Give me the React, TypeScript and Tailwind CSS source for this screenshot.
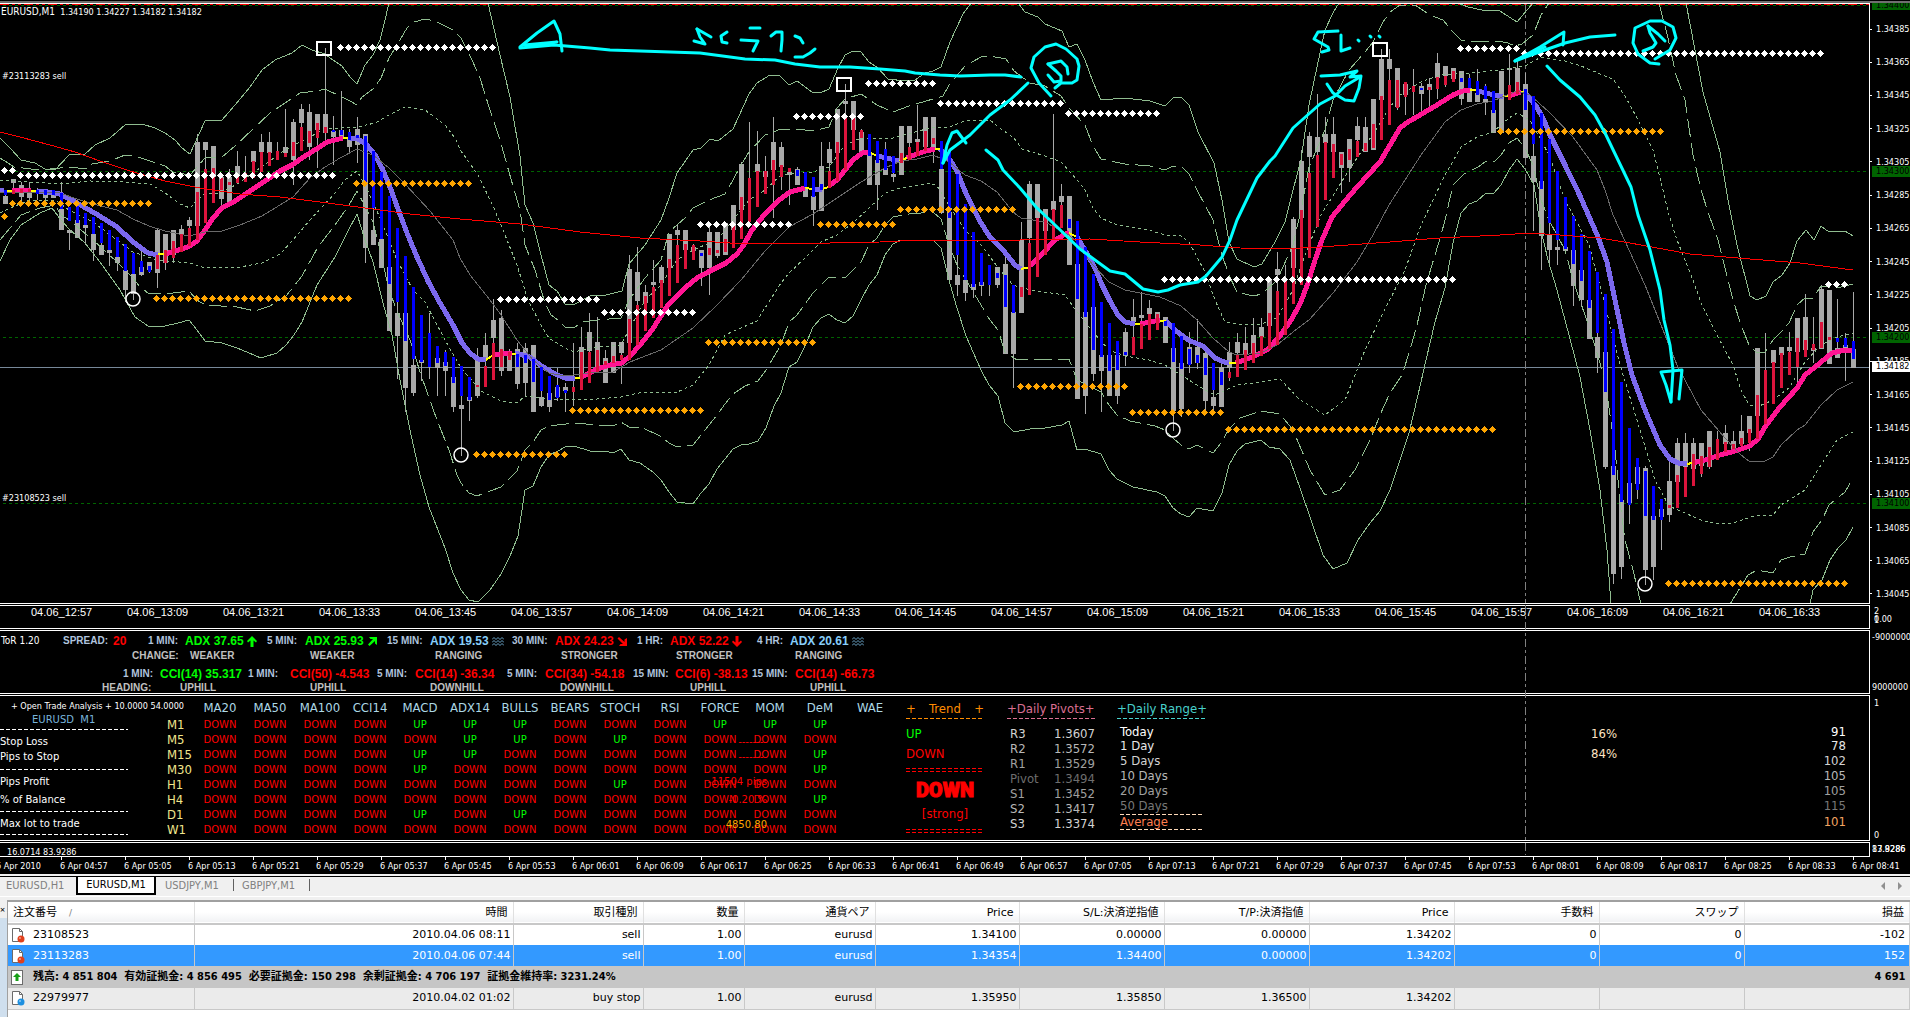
import React from "react";

const COND = "font-['DejaVu_Sans_Condensed','DejaVu_Sans','Noto_Sans_CJK_JP',sans-serif]";
const WIDE = "font-['DejaVu_Sans','Noto_Sans_CJK_JP',sans-serif]";
const ARIAL = "font-['Liberation_Sans',Arial,sans-serif]";

/* wickTop wickBottom bodyTop bodyBottom trend(r|b) trendTop trendBottom, one bar every 8px */
const BARS = `190 204 196 204 b 190 195|179 194 179 183 r 190 194|182 202 185 197 r 189 193|182 202 190 198 r 189 192|188 200 0 0 b 190 194|193 205 194 198 b 190 195|193 198 195 198 b 190 195|182 230 209 230 b 193 209|230 250 230 233 b 207 221|220 238 220 238 b 206 223
213 245 225 228 b 213 225|217 261 234 250 b 217 234|223 255 245 255 b 223 243|230 266 250 253 b 230 250|237 271 257 263 b 237 257|244 302 270 290 b 244 271|253 300 274 294 b 253 274|250 276 267 275 b 261 272|262 273 262 270 b 266 272|229 288 230 273 r 255 269
234 270 234 263 r 250 263|230 263 230 255 r 241 258|225 252 229 234 r 234 252|217 246 220 226 r 228 246|134 226 142 226 r 192 240|142 223 142 150 r 169 223|146 203 146 177 r 168 203|177 205 177 199 r 178 190|169 202 177 202 r 182 185|151 183 166 175 r 175 183
156 182 0 0 r 173 182|151 178 151 162 r 161 178|134 172 142 152 r 152 172|132 166 142 153 r 152 166|142 160 0 0 r 151 160|109 157 147 153 r 153 157|119 185 122 160 r 142 156|104 151 109 123 r 127 151|104 160 112 147 r 131 143|114 168 114 130 r 123 138
48 140 114 133 r 127 133|116 165 131 137 b 130 132|91 138 130 138 b 130 135|129 154 137 147 b 132 140|117 163 129 145 b 135 138|134 263 134 248 b 136 182|207 245 230 245 b 151 208|172 268 239 268 b 172 239|196 331 267 331 b 196 284|300 379 313 336 b 228 302
256 412 313 388 b 256 341|287 396 365 393 b 287 359|315 381 360 363 b 315 362|313 379 0 0 b 333 367|346 396 358 368 b 346 363|350 396 362 371 b 352 366|357 412 377 407 b 357 383|366 456 405 409 b 366 396|377 421 397 401 b 377 400|348 398 360 396 r 385 387
333 387 345 360 r 366 387|299 380 320 338 r 343 380|310 376 318 371 r 349 367|349 371 352 371 r 352 360|343 389 349 384 b 354 367|343 396 348 383 b 355 363|345 412 345 412 b 359 382|367 407 397 406 b 367 391|376 412 393 407 b 376 400|368 401 387 397 b 385 398
383 412 387 391 b 390 393|343 406 0 0 r 387 392|327 390 347 378 r 352 390|313 383 332 351 r 352 383|317 372 342 371 r 350 372|350 383 358 383 r 361 365|342 373 342 373 r 356 363|342 384 342 353 r 355 360|255 343 269 343 r 319 360|247 345 272 301 r 305 345
285 331 292 303 r 296 331|260 318 282 285 r 287 318|265 308 267 283 r 280 308|234 296 234 268 r 259 296|225 283 230 235 r 245 283|230 269 230 250 r 244 269|244 260 247 251 r 245 260|250 286 250 268 b 253 256|225 295 232 268 r 248 255|232 258 232 256 r 250 253
223 255 223 255 r 239 252|205 248 205 230 r 226 248|162 239 164 210 r 197 239|122 222 0 0 r 178 222|131 207 164 172 r 171 207|156 194 171 177 r 171 194|117 218 142 170 r 160 185|142 190 147 167 r 165 177|168 205 172 175 r 168 172|167 185 169 185 b 170 176
172 197 187 197 b 172 187|177 226 196 210 b 177 197|142 211 166 211 b 184 190|142 188 149 163 r 171 188|109 181 109 153 r 142 181|84 170 101 104 r 118 170|101 150 101 130 r 118 150|129 152 132 152 r 130 138|134 185 153 185 b 134 156|141 210 160 185 b 141 163
142 175 168 175 b 149 170|156 182 174 177 b 156 173|126 175 126 175 r 153 163|126 160 126 143 r 147 160|105 156 139 142 r 142 156|117 151 117 147 r 131 151|117 163 117 150 r 138 144|141 214 169 213 b 141 169|150 280 212 280 b 150 218|174 296 275 285 b 174 255
204 301 280 293 b 204 280|232 298 284 290 b 232 287|253 296 282 286 b 253 285|265 296 0 0 b 265 285|267 288 267 285 b 273 278|250 354 264 354 b 275 307|285 388 312 354 b 285 313|222 313 240 313 r 287 297|181 295 184 238 r 243 295|184 277 184 218 r 218 277
209 255 209 231 r 216 255|114 239 201 210 r 209 239|184 228 196 202 r 205 228|196 265 196 265 b 219 228|221 399 264 399 b 221 299|247 414 312 396 b 247 317|274 381 307 374 b 274 350|302 412 355 371 b 302 357|323 396 355 396 b 323 371|341 404 355 396 b 341 370
328 366 332 356 b 352 355|299 355 317 322 r 337 355|292 349 315 318 r 324 349|300 340 308 314 r 314 340|312 330 312 322 r 314 330|317 343 317 343 b 321 326|323 431 348 411 b 323 362|336 417 363 409 b 336 369|332 373 347 364 b 349 365|319 369 347 363 b 355 363
350 412 353 401 b 358 375|363 410 397 406 b 363 390|364 407 367 407 b 372 385|342 381 352 368 r 372 378|333 377 342 353 r 355 377|327 370 343 355 r 350 370|318 363 335 353 r 343 363|318 356 327 337 r 336 356|280 349 280 326 r 313 349|252 345 269 275 r 291 345
265 335 0 0 r 280 335|217 304 219 268 r 249 304|150 285 161 218 r 210 285|132 258 136 157 r 173 258|94 227 137 152 r 155 227|117 200 134 143 r 142 200|117 178 134 152 r 144 178|152 193 152 168 r 154 165|139 182 139 168 r 149 160|117 157 126 140 r 141 157
117 152 127 152 r 143 151|99 150 99 150 r 124 148|49 140 59 100 r 96 140|49 125 59 69 r 80 125|68 110 68 107 r 80 108|82 115 84 95 r 82 97|69 115 0 0 r 86 92|83 115 86 94 b 88 90|78 107 84 90 r 87 90|53 99 63 78 r 77 89
66 87 66 76 r 76 85|68 82 68 79 r 71 82|71 105 71 99 b 78 82|74 102 88 102 b 78 88|69 102 93 102 b 81 95|84 115 99 102 b 86 99|91 133 110 133 b 91 113|71 133 71 133 r 0 0|54 100 68 70 r 85 100|60 95 68 95 r 82 94
73 158 84 158 b 89 110|96 231 156 182 b 96 144|113 270 181 236 b 113 189|139 263 235 250 b 139 223|171 265 247 250 b 171 240|197 251 247 251 b 197 249|216 306 250 286 b 216 264|234 306 270 300 b 234 281|251 339 300 339 b 251 308|272 373 337 358 b 272 333
294 469 352 467 b 294 392|329 584 466 574 b 329 475|382 579 500 567 b 382 502|428 524 483 503 b 428 505|458 499 467 484 b 458 490|466 585 468 570 b 471 516|486 580 516 567 b 486 520|499 550 509 517 b 499 520|454 522 481 515 r 505 508|438 508 443 482 r 475 508
433 497 443 467 r 467 497|438 486 443 469 r 454 486|443 477 443 466 r 456 474|431 469 431 467 r 447 467|431 460 0 0 r 439 460|425 452 433 444 r 442 452|431 451 441 450 r 444 449|415 446 431 444 r 438 446|416 451 416 433 r 429 443|348 439 348 416 r 395 439
333 424 0 0 r 370 424|350 404 350 363 r 362 404|347 388 347 355 r 353 388|332 375 347 351 r 352 375|318 389 318 352 r 338 367|294 357 317 350 r 340 357|317 363 348 351 r 344 350|285 349 289 349 r 322 348|290 364 290 364 r 337 340|299 358 348 358 b 338 342
333 381 345 349 b 338 347|292 368 349 368 b 341 359`
  .split(/[|\n]/)
  .map((s) => s.trim().split(" "));

const UPPER_SOLID = [
  "0,138 10,148 21,160 35,163 45,169 55,170 69,155 85,154 95,145 110,138 125,125 142,124 155,128 165,133 175,140 182,148 190,154 205,121 222,120 235,105 250,87 262,70 275,60 292,53 302,45 312,50 325,54 333,60 342,66 350,77 357,84 365,65 373,55 380,40 385,20 389,3",
  "488,3 500,55 510,97 520,156 525,205 533,223 541,255 549,285 557,291 565,304 575,304 590,296 606,295 622,291 629,264 645,245 661,220 669,198 677,173 693,150 701,148 710,139 718,141 733,129 749,94 757,83 770,75 780,76 789,85 797,81 812,92 820,93 829,89 838,68 845,55 853,51 861,52 869,62 878,68 888,79 905,81 915,80 925,73 933,71 941,67 950,42 963,14 971,3",
  "1018,3 1025,12 1038,17 1045,24 1062,31 1069,47 1077,44 1085,60 1093,82 1101,100 1125,98 1150,101 1165,106 1173,98 1181,97 1189,105 1198,132 1214,163 1222,200 1229,242 1237,259 1254,267 1262,264 1275,242 1285,222 1293,190 1301,160 1309,105 1317,67 1325,30 1333,13 1339,3",
  "1458,3 1468,7 1482,10 1500,11 1517,22 1533,3",
  "1686,3 1695,50 1703,92 1720,152 1728,200 1737,245 1750,296 1757,300 1766,296 1773,282 1782,275 1790,263 1797,241 1806,230 1814,240 1821,226 1829,232 1845,231 1853,236",
];
const LOWER_SOLID = [
  "0,261 10,240 21,225 40,213 52,208 61,220 69,229 85,243 100,262 120,290 135,317 148,326 165,326 178,323 189,320 197,330 205,341 222,343 237,348 261,358 277,353 286,345 294,335 302,322 317,285 335,257 347,233 357,214 365,240 373,262 383,303 392,335 400,380 410,430 420,475 429,507 445,548 453,573 461,590 469,600 478,602 490,590 501,574 510,556 518,536 525,490 533,486 541,467 549,455 558,451 565,447 574,446 590,451 605,451 613,453 621,449 629,460 640,463 653,472 661,480 669,492 677,502 693,504 701,493 709,484 717,469 733,449 741,445 749,444 758,441 766,428 774,406 781,393 789,367 797,362 805,346 813,327 821,318 829,314 837,320 845,323 853,316 861,300 869,285 877,275 885,255 893,244 900,240 933,240 941,248 949,280 957,308 966,336 981,370 989,385 998,396 1005,423 1014,432 1030,429 1045,428 1062,425 1069,421 1077,450 1085,449 1101,454 1109,470 1117,479 1133,487 1157,492 1165,496 1173,508 1181,514 1189,517 1197,508 1213,511 1222,493 1229,465 1237,451 1245,444 1261,440 1269,447 1280,449 1290,460 1300,488 1311,520 1323,555 1333,569 1347,563 1358,540 1370,523 1380,511 1390,490 1400,460 1409,433 1418,395 1426,360 1435,322 1445,288 1453,243 1461,213 1469,204 1477,201 1485,194 1494,193 1501,185 1509,170 1517,159 1525,169 1534,185 1541,230 1548,260 1557,290 1565,320 1580,377 1590,430 1600,490 1607,550 1611,604",
  "1810,604 1813,590 1822,580 1830,560 1838,548 1846,540 1853,527",
];
const DASHED = [
  "0,158 8,163 14,167 40,170 70,167 85,169 92,164 110,161 125,155 135,156 150,161 165,166 173,172 190,175 205,158 222,157 235,146 253,129 270,113 285,103 300,93 317,91 325,89 342,97 350,101 357,105 362,97 373,89 381,78 389,58 397,45 407,28 414,22 425,19 435,21 453,30 461,38 472,60 480,78 490,110 500,140 509,172 520,210 525,245 535,270 545,303 551,315 558,320 566,328 575,327 583,322 598,320 621,318 629,300 645,278 661,260 669,232 685,218 693,208 709,200 725,194 733,180 741,165 749,152 765,135 781,129 797,129 813,131 829,127 837,108 845,99 861,94 877,105 893,112 909,106 933,99 943,96 949,85 965,66 981,57 990,56 1006,59 1014,71 1030,83 1045,86 1061,96 1069,108 1085,125 1093,146 1101,159 1125,164 1150,166 1165,170 1173,166 1181,166 1189,174 1197,190 1213,220 1221,252 1229,275 1237,292 1253,296 1262,294 1277,280 1293,245 1301,210 1309,167 1325,130 1333,100 1349,70 1365,52 1373,42 1383,22 1390,12 1400,5 1415,5 1430,15 1443,20 1453,32 1461,40 1480,42 1498,41 1508,43 1515,46 1522,44 1533,35 1541,15 1549,3",
  "1659,3 1668,38 1676,75 1685,100 1693,155 1701,190 1709,215 1718,240 1733,300 1741,325 1749,345 1757,353 1765,352 1773,340 1781,332 1789,323 1797,305 1805,298 1813,298 1821,286 1837,288 1853,284",
  "0,240 10,228 21,215 40,208 55,205 61,215 69,220 93,240 117,262 133,278 140,287 148,293 165,294 189,291 197,300 205,305 237,307 255,311 270,306 286,296 302,276 318,247 335,225 349,205 357,191 365,206 373,222 380,250 389,290 397,311 410,340 421,375 437,420 449,450 457,475 461,483 469,493 477,496 490,491 501,487 517,471 525,450 533,442 541,430 549,426 574,423 598,425 613,426 621,422 629,427 643,428 660,436 669,443 677,447 693,445 701,435 717,415 725,404 733,394 745,386 758,381 766,370 781,345 789,322 797,315 813,293 829,277 845,278 853,270 861,262 869,245 877,238 885,225 893,217 909,214 933,212 941,219 949,245 957,265 981,305 990,320 998,330 1005,352 1017,360 1053,359 1069,359 1077,380 1101,392 1109,405 1117,415 1130,421 1155,426 1165,430 1173,438 1181,445 1189,449 1197,445 1213,453 1221,443 1229,429 1240,418 1261,411 1280,414 1293,430 1310,470 1325,495 1340,490 1355,470 1370,440 1380,415 1390,393 1402,375 1410,350 1417,325 1426,285 1441,235 1445,220 1453,185 1464,174 1478,167 1485,162 1495,161 1501,155 1509,143 1517,138 1525,148 1533,165 1541,200 1549,220 1565,250 1573,280 1590,330 1605,380 1615,450 1621,510 1625,540 1633,570 1641,604",
  "1730,604 1740,588 1748,575 1757,570 1773,573 1781,560 1790,557 1805,554 1813,532 1822,520 1829,505 1845,492 1853,478",
];
const DOTTED = [
  "0,180 60,184 90,181 125,182 150,184 165,193 180,204 190,208 197,200 205,194 221,193 237,184 253,173 285,150 325,129 357,127 375,123 389,115 405,107 425,110 445,125 455,138 461,151 478,175 493,206 501,225 517,265 528,300 541,325 549,338 565,348 574,352 590,348 621,345 629,330 645,300 661,285 677,260 693,250 717,240 733,220 749,200 765,190 781,175 800,173 813,172 829,167 845,145 861,138 893,138 930,128 949,127 965,121 990,120 997,126 1014,138 1022,149 1045,156 1061,162 1077,180 1085,190 1093,208 1101,218 1117,225 1149,230 1165,235 1181,236 1189,242 1205,272 1215,300 1225,322 1237,324 1261,324 1277,318 1293,290 1305,255 1321,215 1349,170 1381,122 1389,108 1400,95 1421,82 1440,75 1470,73 1500,70 1525,66 1541,57 1565,61 1581,66 1605,76 1613,79 1625,96 1637,118 1653,150 1661,182 1669,215 1677,240 1693,280 1701,303 1717,335 1733,365 1741,390 1749,405 1757,407 1773,400 1789,388 1805,362 1821,345 1837,337 1853,333",
  "0,213 10,208 30,200 55,200 69,210 93,222 117,240 133,252 157,260 190,263 205,268 240,267 262,263 280,254 293,240 310,220 335,193 345,180 357,171 365,185 381,220 397,260 413,290 425,302 445,340 461,368 481,391 501,401 517,403 525,396 550,399 597,399 621,397 643,392 675,393 693,385 709,365 725,335 741,328 757,321 765,308 781,283 789,273 805,258 821,242 837,235 853,223 869,208 885,193 900,188 930,183 937,186 949,205 965,230 981,245 1000,270 1013,285 1030,290 1065,295 1077,312 1093,332 1109,350 1125,356 1149,360 1165,365 1181,375 1205,390 1215,395 1237,385 1261,382 1280,379 1300,400 1325,415 1345,400 1365,350 1381,317 1405,270 1421,225 1445,175 1461,147 1477,137 1493,132 1509,118 1517,113 1530,120 1541,140 1549,155 1565,200 1589,245 1605,305 1620,365 1640,430 1655,480 1669,506 1685,513 1701,520 1717,524 1733,523 1757,515 1773,515 1781,505 1805,490 1821,465 1837,440 1853,432",
];
const MID =
  "0,192 60,193 77,199 93,204 117,210 133,219 149,226 165,231 189,236 205,232 222,231 240,225 262,216 293,197 310,178 325,167 340,158 357,149 373,155 389,168 405,184 430,211 453,240 460,258 470,275 490,300 501,315 517,340 533,360 549,373 565,376 590,373 613,372 630,362 640,358 661,350 693,328 717,305 741,280 765,251 789,227 813,214 837,198 861,182 885,168 901,161 917,159 933,155 949,162 965,175 981,181 997,192 1013,212 1021,218 1045,222 1069,235 1077,242 1085,255 1093,265 1109,282 1125,290 1160,297 1181,306 1197,320 1213,338 1229,352 1237,355 1261,353 1277,345 1293,332 1309,320 1333,293 1357,262 1373,235 1389,205 1405,180 1421,155 1445,122 1461,110 1477,104 1493,101 1509,94 1517,91 1530,95 1549,112 1573,137 1597,170 1605,190 1613,215 1630,252 1645,285 1661,325 1677,365 1701,410 1725,438 1741,455 1749,461 1765,461 1773,457 1781,445 1797,430 1805,425 1821,405 1837,390 1853,382";
const SLOW =
  "0,132 20,137 50,145 75,152 100,161 130,171 165,181 200,188 240,194 280,197 320,202 365,208 410,214 460,219 520,224 580,232 640,238 700,241 730,243 760,243 830,243 880,242 920,240 960,240 1020,240 1090,239 1140,242 1200,245 1240,248 1280,249 1320,247 1390,242 1440,238 1500,235 1530,233 1560,235 1600,238 1630,243 1690,254 1750,259 1800,263 1853,270";

const DOWNTREND = [
  "0,190 4,191",
  "37,191 48,192 60,194 77,203 98,215 117,227 133,242 148,253 158,255",
  "350,138 358,139 366,144 375,155 382,168 390,187 398,209 407,233 417,257 428,281 440,303 453,325 462,343 470,353 478,359 486,360",
  "515,353 530,357 540,365 555,374 565,378 575,379",
  "813,190 822,189",
  "877,156 887,158 899,161",
  "940,149 950,160 957,171 965,191 973,208 981,223 990,237 1003,250 1015,265 1021,269",
  "1077,237 1086,252 1095,268 1102,285 1110,301 1118,315 1125,322 1135,324",
  "1166,321 1175,330 1188,340 1203,346 1215,358 1224,362 1229,363",
  "1478,91 1490,94 1503,97",
  "1526,94 1536,106 1543,118 1550,135 1565,165 1580,196 1598,237 1607,262 1615,300 1624,343 1632,375 1645,410 1660,445 1670,459 1678,463 1687,464",
];
const UPTREND = [
  "12,191 31,190",
  "165,254 175,251 188,247 197,241 205,230 213,218 222,208 235,201 250,191 265,181 280,171 292,165 305,156 318,148 327,142 343,138",
  "493,355 501,354 512,353",
  "582,377 597,369 610,365 622,363 630,356 640,345 652,330 668,305 685,288 697,278 708,272 726,263 737,254 743,246 752,230 764,215 778,201 790,192 805,188",
  "829,186 837,180 845,170 853,160 862,153 869,152",
  "907,158 917,154 926,151 935,149",
  "1030,266 1040,256 1055,240 1069,232",
  "1140,324 1150,322 1160,320",
  "1236,363 1255,356 1268,349 1280,336 1291,320 1300,304 1308,283 1315,260 1322,240 1332,217 1350,195 1368,175 1380,162 1390,145 1400,128 1408,122 1420,115 1437,105 1453,95 1463,91 1470,90",
  "1508,96 1521,92",
  "1692,463 1705,460 1720,455 1735,451 1750,446 1758,439 1765,427 1780,407 1797,388 1805,375 1820,363 1832,353 1845,350 1855,351",
];
const TURNS = [
  "4,191 12,191", "31,191 37,191", "158,254 165,254", "343,138 350,138", "486,360 493,355", "512,354 516,354", "575,378 582,378",
  "805,187 813,190", "822,189 829,187", "869,152 877,156", "899,161 907,158", "935,149 940,149", "1021,269 1030,267", "1069,233 1077,237",
  "1135,324 1140,324", "1160,321 1166,321", "1229,363 1236,363", "1470,90 1478,90", "1503,96 1508,96", "1521,92 1526,93", "1687,464 1692,463",
];

const RES = [[4, 170, 2], [20, 175, 40], [340, 47, 20], [500, 299, 13], [604, 312, 12], [700, 224, 12], [796, 116, 9], [868, 83, 9], [940, 103, 16], [1068, 113, 12], [1164, 279, 37], [1460, 48, 8], [1524, 53, 38], [1828, 284, 3]];
const SUP = [[4, 216, 1], [12, 203, 18], [156, 298, 25], [356, 183, 15], [476, 454, 12], [572, 410, 17], [708, 342, 14], [820, 224, 10], [900, 209, 15], [1020, 386, 14], [1132, 412, 12], [1228, 429, 34], [1500, 131, 21], [1668, 583, 23]];

const INK = [
  "520,48 554,45 590,48 610,50 700,53 745,59 775,60 795,64 820,67 850,67 880,69 905,71 915,73 940,75 960,76 990,75 1005,75 1021,77",
  "520,47 537,33 554,21 560,34 562,51", "524,45 557,42 530,46", "697,29 711,37", "697,29 700,37 705,44 694,41", "727,32 721,36 722,42 727,43",
  "750,28 760,28", "741,40 758,41 753,51", "771,36 776,32 782,32 782,40 781,51", "795,36 800,38 803,43", "795,57 803,57 810,53 815,49",
  "1028,83 1010,100 990,115 970,135 950,150 943,163", "943,163 947,145 952,133 957,131 966,143",
  "1051,96 1039,83 1031,68 1034,57 1045,47 1056,44 1066,49 1077,59 1079,66 1077,80 1072,83 1061,83 1055,88",
  "1048,64 1061,61 1067,67 1068,74", "1048,64 1056,71 1061,76 1061,81 1054,82 1048,75",
  "986,150 998,160 1003,170 1020,188 1036,207 1055,225 1080,249 1110,271 1125,274 1143,289 1158,292 1168,290 1180,285 1198,282 1206,276 1222,257 1230,240 1237,220 1257,178 1270,161 1275,156 1293,128 1320,104 1335,96 1345,86 1360,77",
  "1321,76 1340,75 1357,71 1350,77 1361,76 1359,88 1354,101 1345,100 1333,93 1327,84",
  "1338,31 1318,32 1314,39 1328,47 1329,50 1322,52", "1341,35 1341,51 1350,48", "1358,40 1359,41", "1370,36 1371,37", "1379,36 1380,37",
  "1515,61 1545,50 1565,43 1590,37 1615,35", "1515,61 1540,47 1564,32 1563,45", "1516,60 1545,47",
  "1659,64 1650,63 1638,54 1633,43 1635,28 1650,21 1662,21 1673,27 1676,38 1670,50 1655,59",
  "1648,26 1650,33 1656,43 1653,47 1643,51", "1648,26 1658,34 1665,41",
  "1547,66 1560,80 1580,97 1595,115 1605,133 1618,160 1631,187 1638,215 1650,250 1660,290 1664,320 1670,345 1673,370 1671,402",
  "1679,399 1682,370 1661,372 1666,385 1671,402",
];

const diamonds = (rows: number[][]) =>
  rows
    .map(([x, y, n]) => Array.from({ length: n }, (_, i) => `M${x + i * 8 - 3} ${y + 0.5}l3.500 -3.500l3.500 3.500l-3.500 3.500z`).join(""))
    .join("");

function Lines({ list, color, w = 1, dash }: { list: string[]; color: string; w?: number; dash?: string }) {
  return (
    <g fill="none" stroke={color} strokeWidth={w} strokeDasharray={dash}>
      {list.map((p) => (
        <polyline key={p} points={p} />
      ))}
    </g>
  );
}

function PriceChart() {
  return (
    <svg className="block h-[599px] w-full" viewBox="0 4 1869 599" preserveAspectRatio="none" role="img" aria-label="EURUSD M1 price chart">
      <g shapeRendering="crispEdges">
        <path d="M0 4.5H1869" stroke="#ff0000" strokeDasharray="9 3 3 3 3 3" />
        {[5, 171, 337, 503].map((y) => (
          <path key={y} d={`M3 ${y}.5H1869`} stroke="#006400" strokeDasharray="3 3" />
        ))}
        <path d="M0 367.5H1869" stroke="#778899" />
        <path d="M1525.5 4V603" stroke="#808080" strokeDasharray="8 3 3 3" />
        {BARS.map((b, i) => {
          const x = i * 8 + 5;
          const [wt, wb, bt, bb] = b.slice(0, 4).map(Number);
          return (
            <g key={i} fill="#a9a9a9">
              <rect x={x} y={wt} width="1" height={wb - wt} />
              {bb > 0 && <rect x={x - 2} y={bt} width="5" height={bb - bt} />}
            </g>
          );
        })}
      </g>
      <g shapeRendering="crispEdges">
        <Lines list={DOWNTREND} color="#7b68ee" w={5} />
        <Lines list={UPTREND} color="#ff1493" w={5} />
        <Lines list={TURNS} color="#ffff00" w={2} />
        <Lines list={[MID]} color="#696969" />
        <Lines list={[...UPPER_SOLID, ...LOWER_SOLID]} color="#8fbc8f" />
        <Lines list={DASHED} color="#8fbc8f" dash="18 6" />
        <Lines list={DOTTED} color="#8fbc8f" dash="3 3" />
        {BARS.map((b, i) =>
          b[5] === "0" ? null : (
            <rect key={i} x={i * 8 + 4} y={Number(b[5])} width="3" height={Number(b[6]) - Number(b[5])} fill={b[4] === "r" ? "#dc143c" : "#0000ff"} />
          ),
        )}
        <Lines list={[SLOW]} color="#ff0000" />
        <path d={diamonds(RES)} fill="#fff" />
        <path d={diamonds(SUP)} fill="#ffa500" />
      </g>
      <g fill="none" stroke="#fff" strokeWidth="2">
        {[[324, 48], [844, 84], [1380, 49]].map(([x, y]) => (
          <rect key={x} x={x - 7} y={y - 6} width="14" height="13" />
        ))}
        {[[133, 299], [461, 455], [1173, 430], [1645, 584]].map(([x, y]) => (
          <circle key={x} cx={x} cy={y} r="7" strokeWidth="1.5" />
        ))}
      </g>
      <g fill="none" stroke="#00ffff" strokeWidth="3" strokeLinecap="round" strokeLinejoin="round">
        {INK.map((p) => (
          <polyline key={p} points={p} />
        ))}
      </g>
    </svg>
  );
}

const PRICES = ["1.34385", "1.34365", "1.34345", "1.34325", "1.34305", "1.34285", "1.34265", "1.34245", "1.34225", "1.34205", "1.34185", "1.34165", "1.34145", "1.34125", "1.34105", "1.34085", "1.34065", "1.34045"];

function Axis({ children, className = "" }: { children?: React.ReactNode; className?: string }) {
  return <div className={`relative w-10 shrink-0 overflow-hidden text-[9px] leading-3 text-white ${COND} ${className}`}>{children}</div>;
}

function PriceAxis() {
  return (
    <Axis>
      <div className="flex h-full flex-col justify-between pt-5 pb-1">
        {PRICES.map((p) => (
          <div key={p} className="flex h-3 items-center gap-1">
            <i className="h-px w-0.5 bg-white" />
            {p}
          </div>
        ))}
      </div>
      <div className="absolute top-[-3px] right-0 left-0.5 h-[10px] bg-[#006400] pl-1 leading-[10px] text-black">1.34400</div>
      <div className="absolute top-[163px] right-0 left-0.5 h-[11px] bg-[#006400] pl-1 leading-[11px] text-black">1.34300</div>
      <div className="absolute top-[329px] right-0 left-0.5 h-[11px] bg-[#006400] pl-1 leading-[11px] text-black">1.34200</div>
      <div className="absolute top-[495px] right-0 left-0.5 h-[11px] bg-[#006400] pl-1 leading-[11px] text-black">1.34100</div>
      <div className="absolute top-[358px] right-0 left-0.5 h-[11px] bg-white pl-1 leading-[11px] text-black">1.34182</div>
    </Axis>
  );
}

function Panel({ className, axis, children }: { className: string; axis: React.ReactNode; children?: React.ReactNode }) {
  return (
    <section className={`mt-px flex ${className}`}>
      <div className="relative min-w-0 flex-1 overflow-hidden border-y border-r border-white whitespace-nowrap">{children}</div>
      {axis}
    </section>
  );
}

const clock = (start: number, step: number, n: number) =>
  Array.from({ length: n }, (_, i) => {
    const t = start + step * i;
    return `${String(Math.floor(t / 60)).padStart(2, "0")}:${String(t % 60).padStart(2, "0")}`;
  });

type SignalKind = "up" | "upright" | "downright" | "down" | "wave";
function Signal({ kind }: { kind: SignalKind }) {
  if (kind === "wave")
    return (
      <svg width="12" height="9" viewBox="0 0 12 9" fill="none" stroke="#87cefa" strokeWidth=".8" aria-hidden="true">
        <path d="M0 2.500l2-2 2 2 2-2 2 2 2-2 2 2M0 5.500l2-2 2 2 2-2 2 2 2-2 2 2M0 8.500l2-2 2 2 2-2 2 2 2-2 2 2" />
      </svg>
    );
  const d = {
    up: "M5 0l5 5-1 1.500-2.500-2V11h-3V4.500L1 6.500 0 5z",
    down: "M5 11l5-5-1-1.500-2.500 2V0h-3v6.500L1 4.500 0 6z",
    upright: "M2 1h8v8L8 7.500V5L2.500 10 1 8.500 6 3H3.500z",
    downright: "M10 10H2l1.500-2H6L0.500 2.500 2 1l5.500 5V3.500L10 2z",
  }[kind];
  return (
    <svg width="10" height="11" viewBox="0 0 10 11" fill={kind.startsWith("up") ? "#00ff00" : "#ff0000"} aria-hidden="true">
      <path d={d} />
    </svg>
  );
}

const LBL = "text-[10px] text-[#b0c4de]";
const GRY = "text-[10px] text-[#c0c0c0]";
const RED = "text-xs text-[#ff0000]";
const LIME = "text-xs text-[#00ff00]";
const SKY = "text-xs text-[#87cefa]";

type Item = [string | { kind: SignalKind }, string, string];
const ROW1: Item[] = [
  ["SPREAD:", LBL, "w-[50px]"], ["20", RED, "w-[35px]"],
  ["1 MIN:", LBL, "w-[37px]"], ["ADX 37.65", LIME, "w-[62px]"], [{ kind: "up" }, "", "w-[20px]"],
  ["5 MIN:", LBL, "w-[38px]"], ["ADX 25.93", LIME, "w-[62px]"], [{ kind: "upright" }, "", "w-[20px]"],
  ["15 MIN:", LBL, "w-[43px]"], ["ADX 19.53", SKY, "w-[62px]"], [{ kind: "wave" }, "", "w-[20px]"],
  ["30 MIN:", LBL, "w-[43px]"], ["ADX 24.23", RED, "w-[62px]"], [{ kind: "downright" }, "", "w-[20px]"],
  ["1 HR:", LBL, "w-[33px]"], ["ADX 52.22", RED, "w-[62px]"], [{ kind: "down" }, "", "w-[25px]"],
  ["4 HR:", LBL, "w-[33px]"], ["ADX 20.61", SKY, "w-[62px]"], [{ kind: "wave" }, "", "w-[20px]"],
];
const ROW2: Item[] = [["CHANGE:", GRY, "w-[58px]"], ["WEAKER", GRY, "w-[120px]"], ["WEAKER", GRY, "w-[125px]"], ["RANGING", GRY, "w-[126px]"], ["STRONGER", GRY, "w-[115px]"], ["STRONGER", GRY, "w-[119px]"], ["RANGING", GRY, "w-[60px]"]];
const ROW3: Item[] = [
  ["1 MIN:", LBL, "w-[37px]"], ["CCI(14) 35.317", LIME, "w-[88px]"], ["1 MIN:", LBL, "w-[42px]"], ["CCI(50) -4.543", RED, "w-[87px]"],
  ["5 MIN:", LBL, "w-[38px]"], ["CCI(14) -36.34", RED, "w-[92px]"], ["5 MIN:", LBL, "w-[38px]"], ["CCI(34) -54.18", RED, "w-[88px]"],
  ["15 MIN:", LBL, "w-[42px]"], ["CCI(6) -38.13", RED, "w-[77px]"], ["15 MIN:", LBL, "w-[43px]"], ["CCI(14) -66.73", RED, "w-[90px]"],
];
const ROW4: Item[] = [["HEADING:", GRY, "w-[78px]"], ["UPHILL", GRY, "w-[130px]"], ["UPHILL", GRY, "w-[120px]"], ["DOWNHILL", GRY, "w-[130px]"], ["DOWNHILL", GRY, "w-[130px]"], ["UPHILL", GRY, "w-[120px]"], ["UPHILL", GRY, "w-[60px]"]];

function Row({ items, className }: { items: Item[]; className: string }) {
  return (
    <div className={`flex items-center leading-none font-bold ${ARIAL} ${className}`}>
      {items.map(([t, c, w], i) => (
        <span key={i} className={`shrink-0 ${w} ${c}`}>
          {typeof t === "string" ? t : <Signal kind={t.kind} />}
        </span>
      ))}
    </div>
  );
}

const HEADS = ["MA20", "MA50", "MA100", "CCI14", "MACD", "ADX14", "BULLS", "BEARS", "STOCH", "RSI", "FORCE", "MOM", "DeM", "WAE"];
const MATRIX: [string, string][] = [
  ["M1", "DDDDUUUDDDUUU"],
  ["M5", "DDDDDUUDUDDDD"],
  ["M15", "DDDDUUDDDDDDU"],
  ["M30", "DDDDUDDDDDDDU"],
  ["H1", "DDDDDDDDUDDDD"],
  ["H4", "DDDDDDDDDDDDU"],
  ["D1", "DDDDUDUDDDDDD"],
  ["W1", "DDDDDDDDDDDDD"],
];

function SignalTable() {
  return (
    <table className={`mt-[3px] w-[728px] shrink-0 table-fixed border-collapse self-start ${COND}`}>
      <thead>
        <tr className="h-[18px] text-[13px] leading-[18px] text-[#add8e6]">
          <th className="w-7 p-0" aria-label="Timeframe" />
          {HEADS.map((h) => (
            <th key={h} className="p-0 font-normal">{h}</th>
          ))}
        </tr>
      </thead>
      <tbody>
        {MATRIX.map(([tf, cells]) => (
          <tr key={tf} className="h-[15px] leading-[15px]">
            <th className="p-0 text-left text-[13px] font-normal text-[#f0e68c]">{tf}</th>
            {cells.split("").map((c, i) => (
              <td key={i} className={`p-0 text-center text-[10px] ${WIDE} ${c === "U" ? "text-[#00ff00]" : "text-[#ff0000]"}`}>{c === "U" ? "UP" : "DOWN"}</td>
            ))}
            <td className="p-0" />
          </tr>
        ))}
      </tbody>
    </table>
  );
}

function Dashes({ className }: { className: string }) {
  return (
    <div
      className={`h-px bg-[repeating-linear-gradient(90deg,currentColor_0_4px,transparent_4px_6px)] ${className}`}
    />
  );
}

function Double({ className }: { className: string }) {
  return (
    <div className={className}>
      <Dashes className="" />
      <Dashes className="mt-0.5" />
    </div>
  );
}

function TradeAnalysis() {
  const row = "h-[15px] leading-[14px]";
  return (
    <div className={`w-[167px] shrink-0 text-[10px] text-white ${WIDE}`}>
      <div className={`ml-[11px] pt-[3px] text-[9px] leading-[14px] ${COND}`}>+ Open Trade Analysis + 10.0000 54.0000</div>
      <div className="ml-8 h-4 leading-[13px] whitespace-pre text-[#79b4dc]">EURUSD  M1</div>
      <Dashes className="w-32" />
      <div className={`mt-[5px] ${row}`}>Stop Loss</div>
      <div className={row}>Pips to Stop</div>
      <Dashes className="mt-1 w-32" />
      <div className={`mt-[5px] ${row}`}>Pips Profit</div>
      <div className={`mt-[3px] ${row}`}>% of Balance</div>
      <Dashes className="mt-[3px] w-32" />
      <div className={`mt-[5px] ${row}`}>Max lot to trade</div>
      <Dashes className="mt-[2px] w-32" />
    </div>
  );
}

const PIVOTS: [string, string, string][] = [
  ["R3", "1.3607", "text-[#d3d3d3]"],
  ["R2", "1.3572", "text-[#b8b8b8]"],
  ["R1", "1.3529", "text-[#a0a0a0]"],
  ["Pivot", "1.3494", "text-[#6e6e6e]"],
  ["S1", "1.3452", "text-[#a0a0a0]"],
  ["S2", "1.3417", "text-[#b8b8b8]"],
  ["S3", "1.3374", "text-[#d3d3d3]"],
];
const RANGES: [string, string, string, string][] = [
  ["Today", "91", "text-white", "h-[15px] leading-[15px]"],
  ["1 Day", "78", "text-[#e8e8e8]", "h-[14px] leading-[14px]"],
  ["5 Days", "102", "text-[#d3d3d3]", "h-[15px] leading-[15px]"],
  ["10 Days", "105", "text-[#b8b8b8]", "h-[15px] leading-[15px]"],
  ["20 Days", "105", "text-[#a0a0a0]", "h-[15px] leading-[15px]"],
  ["50 Days", "115", "text-[#787878]", "h-[15px] leading-[15px]"],
];

function Dashboard() {
  return (
    <div className={`flex h-full ${COND} text-[13px]`}>
      <TradeAnalysis />
      <SignalTable />
      <div className={`absolute top-[38px] left-[700px] flex w-[67px] flex-col text-right text-[10px] leading-[15px] text-[#ff0000] ${WIDE}`}>
        <span>--------</span>
        <span>--------</span>
        <span className="mt-[10px]">-11504 pips</span>
        <span className="mt-[3px]">-0.20 %</span>
        <span className="mt-[10px] text-[#ffa500]">4850.80</span>
      </div>
      <div className="ml-[11px] w-[78px] shrink-0 pt-[3px] text-[#ff0000]">
        <div className="flex h-[19px] justify-between leading-[19px] text-[#ff8c00]">
          <span>+</span>
          <span>Trend</span>
          <span>+</span>
        </div>
        <Dashes className="text-[#ff8c00]" />
        <div className="mt-[7px] h-[15px] leading-[15px] text-[#00ff00]">UP</div>
        <div className="mt-[5px] h-4 leading-[15px]">DOWN</div>
        <Double className="mt-[6px]" />
        <div className="h-9 text-center font-['Roboto',sans-serif] text-xl leading-9 font-black [-webkit-text-stroke:1px_#ff0000]">DOWN</div>
        <div className="h-[14px] text-center leading-[12px]">[strong]</div>
        <Double className="mt-[7px]" />
      </div>
      <div className="ml-[23px] w-[90px] shrink-0 pt-[3px]">
        <div className="h-[19px] leading-[19px] text-[#db7093]">+Daily Pivots+</div>
        <Dashes className="mb-[7px] text-[#db7093]" />
        {PIVOTS.map(([k, v, c]) => (
          <div key={k} className={`flex h-[15px] justify-between pr-0.5 pl-[3px] leading-[15px] ${c}`}>
            <span>{k}</span>
            <span>{v}</span>
          </div>
        ))}
      </div>
      <div className="ml-[20px] w-[474px] shrink pt-[3px]">
        <div className="h-[19px] leading-[19px] text-[#48d1cc]">+Daily Range+</div>
        <Dashes className="mb-[5px] w-[90px] text-[#48d1cc]" />
        {RANGES.map(([k, , c, h]) => (
          <div key={k} className={`pl-[3px] ${h} ${c}`}>{k}</div>
        ))}
        <Dashes className="mt-px ml-[3px] w-[84px] text-[#ffdab9]" />
        <div className="h-[14px] pl-[3px] leading-[14px] text-[#ff7f50]">Average</div>
        <Dashes className="ml-[3px] w-[84px] text-[#ffdab9]" />
      </div>
      <div className="pt-[30px] text-[#ffe4c4]">
        <div className="h-[15px] leading-[15px]">16%</div>
        <div className="mt-[5px] h-[15px] leading-[15px]">84%</div>
      </div>
      <div className="ml-auto pt-7 pr-[23px] text-right">
        {RANGES.map(([k, v, c, h]) => (
          <div key={k} className={`${h} ${c}`}>{v}</div>
        ))}
        <div className="mt-[2px] h-[14px] leading-[14px] text-[#f4a460]">101</div>
      </div>
    </div>
  );
}

function DocIcon({ color }: { color: string }) {
  return (
    <svg width="14" height="16" viewBox="0 0 14 16" className="shrink-0" aria-hidden="true">
      <path d="M1.500 1.500h7l3 3v10h-10z" fill="#fff" stroke="#6b6b6b" />
      <path d="M8.500 1.500v3h3" fill="none" stroke="#6b6b6b" />
      <circle cx="10" cy="12" r="3.500" fill={color} />
      <circle cx="9" cy="11" r="1" fill="#fff" opacity=".5" />
    </svg>
  );
}

const COLS: [string, string][] = [
  ["注文番号", "w-[186px]"], ["時間", "w-[319px]"], ["取引種別", "w-[130px]"], ["数量", "w-[101px]"], ["通貨ペア", "w-[131px]"], ["Price", "w-[144px]"],
  ["S/L:決済逆指値", "w-[145px]"], ["T/P:決済指値", "w-[145px]"], ["Price", "w-[145px]"], ["手数料", "w-[145px]"], ["スワップ", "w-[145px]"], ["損益", ""],
];
const ORDERS = [
  { cls: "bg-white text-black", dot: "#e0401c", v: ["23108523", "2010.04.06 08:11", "sell", "1.00", "eurusd", "1.34100", "0.00000", "0.00000", "1.34202", "0", "0", "-102"] },
  { cls: "bg-[#3399ff] text-white", dot: "#e0401c", v: ["23113283", "2010.04.06 07:44", "sell", "1.00", "eurusd", "1.34354", "1.34400", "0.00000", "1.34202", "0", "0", "152"] },
  { cls: "bg-[#ebebeb] text-black", dot: "#1e90e0", v: ["22979977", "2010.04.02 01:02", "buy stop", "1.00", "eurusd", "1.35950", "1.35850", "1.36500", "1.34202", "", "", ""] },
];

function OrderRow({ o, className }: { o: (typeof ORDERS)[number]; className: string }) {
  return (
    <tr className={`${className} ${o.cls}`}>
      {o.v.map((v, i) =>
        i === 0 ? (
          <td key={i} className="border-r border-[#c8c8c8] p-0">
            <div className="flex items-center gap-2 pl-[3px]">
              <DocIcon color={o.dot} />
              {v}
            </div>
          </td>
        ) : (
          <td key={i} className="border-r border-[#c8c8c8] p-0 pr-0.5 text-right last:pr-1">{v}</td>
        ),
      )}
    </tr>
  );
}

function Terminal() {
  return (
    <div className="flex h-[120px] flex-1 bg-white">
      <div className="flex w-[7px] shrink-0 flex-col bg-[#cfdfee]">
        <button type="button" aria-label="Close" className="h-[18px] overflow-hidden bg-[#f0f0f0] text-left text-[9px] leading-[9px] text-black">
          ×
        </button>
      </div>
      <div className="min-w-0 flex-1 border-t-2 border-l border-[#a0a0a0] bg-white">
        <table className={`w-full table-fixed border-collapse text-[11px] leading-4 text-black ${WIDE}`}>
          <thead>
            <tr className="h-[22px] border-b-2 border-[#c8c8c8] bg-gradient-to-b from-white from-50% to-[#f1f2f4]">
              {COLS.map(([c, w], i) => (
                <th key={i} className={`${w} border-r border-[#e0e0e0] p-0 font-normal whitespace-nowrap ${i === 0 ? "pl-[5px] text-left" : "pr-[5px] text-right"}`}>
                  {c}
                  {i === 0 && <span className="ml-3 text-[9px] text-[#808080]">/</span>}
                </th>
              ))}
            </tr>
          </thead>
          <tbody>
            <OrderRow o={ORDERS[0]} className="h-[21px]" />
            <OrderRow o={ORDERS[1]} className="h-[21px]" />
            <tr className={`h-[22px] bg-[#c6c6c6] font-bold ${COND}`}>
              <td colSpan={11} className="p-0">
                <div className="flex items-center pl-[3px] whitespace-pre">
                  <svg width="12" height="15" viewBox="0 0 12 15" className="mr-[10px] shrink-0" aria-hidden="true">
                    <rect x=".5" y=".5" width="11" height="14" fill="#fff" stroke="#6b6b6b" />
                    <path d="M6 3l4 4H7.500v4h-3V7H2z" fill="#18a018" />
                  </svg>
                  {"残高: 4 851 804  有効証拠金: 4 856 495  必要証拠金: 150 298  余剰証拠金: 4 706 197  証拠金維持率: 3231.24%"}
                </div>
              </td>
              <td className="p-0 pr-1 text-right">4 691</td>
            </tr>
            <OrderRow o={ORDERS[2]} className="h-[21px] border-b border-[#c8c8c8]" />
          </tbody>
        </table>
      </div>
    </div>
  );
}

function ChartTabs() {
  const tab = "h-[18px] leading-[14px] text-[#808080]";
  return (
    <nav className={`flex h-[19px] items-start bg-[#f0f0f0] text-[11px] ${COND}`}>
      <button type="button" className={`w-[76px] pl-1.5 text-left ${tab}`}>EURUSD,H1</button>
      <button type="button" className="h-[18px] w-20 border-x-2 border-b-2 border-black bg-white text-center leading-[14px] text-black">EURUSD,M1</button>
      <button type="button" className={`w-[77px] pl-[9px] text-left ${tab}`}>USDJPY,M1</button>
      <i className="mt-0.5 h-3 w-px bg-[#606060]" />
      <button type="button" className={`w-[75px] pl-2 text-left ${tab}`}>GBPJPY,M1</button>
      <i className="mt-0.5 h-3 w-px bg-[#606060]" />
      <div className="mt-[5px] mr-2 ml-auto flex gap-[13px]">
        <button type="button" aria-label="Previous" className="h-2 w-1">
          <svg width="4" height="8" viewBox="0 0 4 8"><path d="M4 0v8L0 4z" fill="#909090" /></svg>
        </button>
        <button type="button" aria-label="Next" className="h-2 w-1">
          <svg width="4" height="8" viewBox="0 0 4 8"><path d="M0 0v8l4-4z" fill="#909090" /></svg>
        </button>
      </div>
    </nav>
  );
}

export default function App() {
  return (
    <main className="flex min-h-screen flex-col overflow-hidden bg-white">
      <div className="relative bg-black">
        <div className="h-px bg-black" />
        <div className="h-0.5 bg-[#6e6e6e]" />
        <section className="flex">
          <div className={`relative min-w-0 flex-1 overflow-hidden border-y border-r border-white text-[9px] leading-3 whitespace-pre text-white ${COND}`}>
            <PriceChart />
            <div className="absolute top-[2px] left-px"><span className="text-[10px]">EURUSD,M1</span>  1.34190 1.34227 1.34182 1.34182</div>
            <div className="absolute top-[66px] left-[2px]">#23113283 sell</div>
            <div className="absolute top-[488px] left-[2px]">#23108523 sell</div>
          </div>
          <PriceAxis />
        </section>

        <Panel className="h-6" axis={<Axis><span className="absolute top-0 left-1">2</span><span className="absolute top-[9px] left-1">1</span><span className="absolute top-2 left-1">0.00</span></Axis>}>
          <div className={`flex pl-[31px] text-[11px] leading-[13px] text-white ${ARIAL}`}>
            {clock(777, 12, 19).map((t) => (
              <span key={t} className="w-24 shrink-0">04.06_{t}</span>
            ))}
          </div>
        </Panel>

        <Panel className="h-16" axis={<Axis><div className="flex h-full flex-col justify-between py-px pl-0.5"><span>-9000000</span><span>9000000</span></div></Axis>}>
          <div className="flex h-[19px] items-center pt-px">
            <span className={`w-[63px] pl-px text-[10px] leading-none text-white ${COND}`}>ToR 1.20</span>
            <Row items={ROW1} className="h-[18px]" />
          </div>
          <Row items={ROW2} className="h-[11px] pl-[132px]" />
          <Row items={ROW3} className="mt-[3px] h-[19px] pl-[123px]" />
          <Row items={ROW4} className="h-[9px] pl-[102px]" />
        </Panel>

        <Panel className="h-[146px]" axis={<Axis><div className="flex h-full flex-col justify-between pt-0.5 pl-1"><span>1</span><span>0</span></div></Axis>}>
          <Dashboard />
        </Panel>

        <Panel className="h-[15px]" axis={<Axis><span className="absolute top-px left-0.5">17.8286</span><span className="absolute top-px left-0.5">83.9286</span></Axis>}>
          <span className={`block pl-[7px] text-[9px] leading-[18px] text-white ${COND}`}>16.0714 83.9286</span>
        </Panel>

        <div className={`flex h-[17px] overflow-hidden text-[9px] leading-[18px] whitespace-nowrap text-white ${COND}`}>
          <span className="-ml-1 w-16 shrink-0">6 Apr 2010</span>
          {clock(297, 8, 29).map((t) => (
            <span key={t} className="relative w-16 shrink-0">
              <i className="absolute top-0 left-px h-[3px] w-px bg-white" />6 Apr {t}
            </span>
          ))}
        </div>
        <div className="absolute top-[605px] left-[1525px] h-[250px] w-px bg-[repeating-linear-gradient(180deg,#808080_0_8px,transparent_8px_11px,#808080_11px_14px,transparent_14px_17px)]" />
      </div>
      <div className="h-0.5 bg-[#f0f0f0]" />
      <div className="h-px bg-black" />
      <ChartTabs />
      <div className="h-px bg-white" />
      <div className="h-[3px] bg-[#f0f0f0]" />
      <Terminal />
    </main>
  );
}
